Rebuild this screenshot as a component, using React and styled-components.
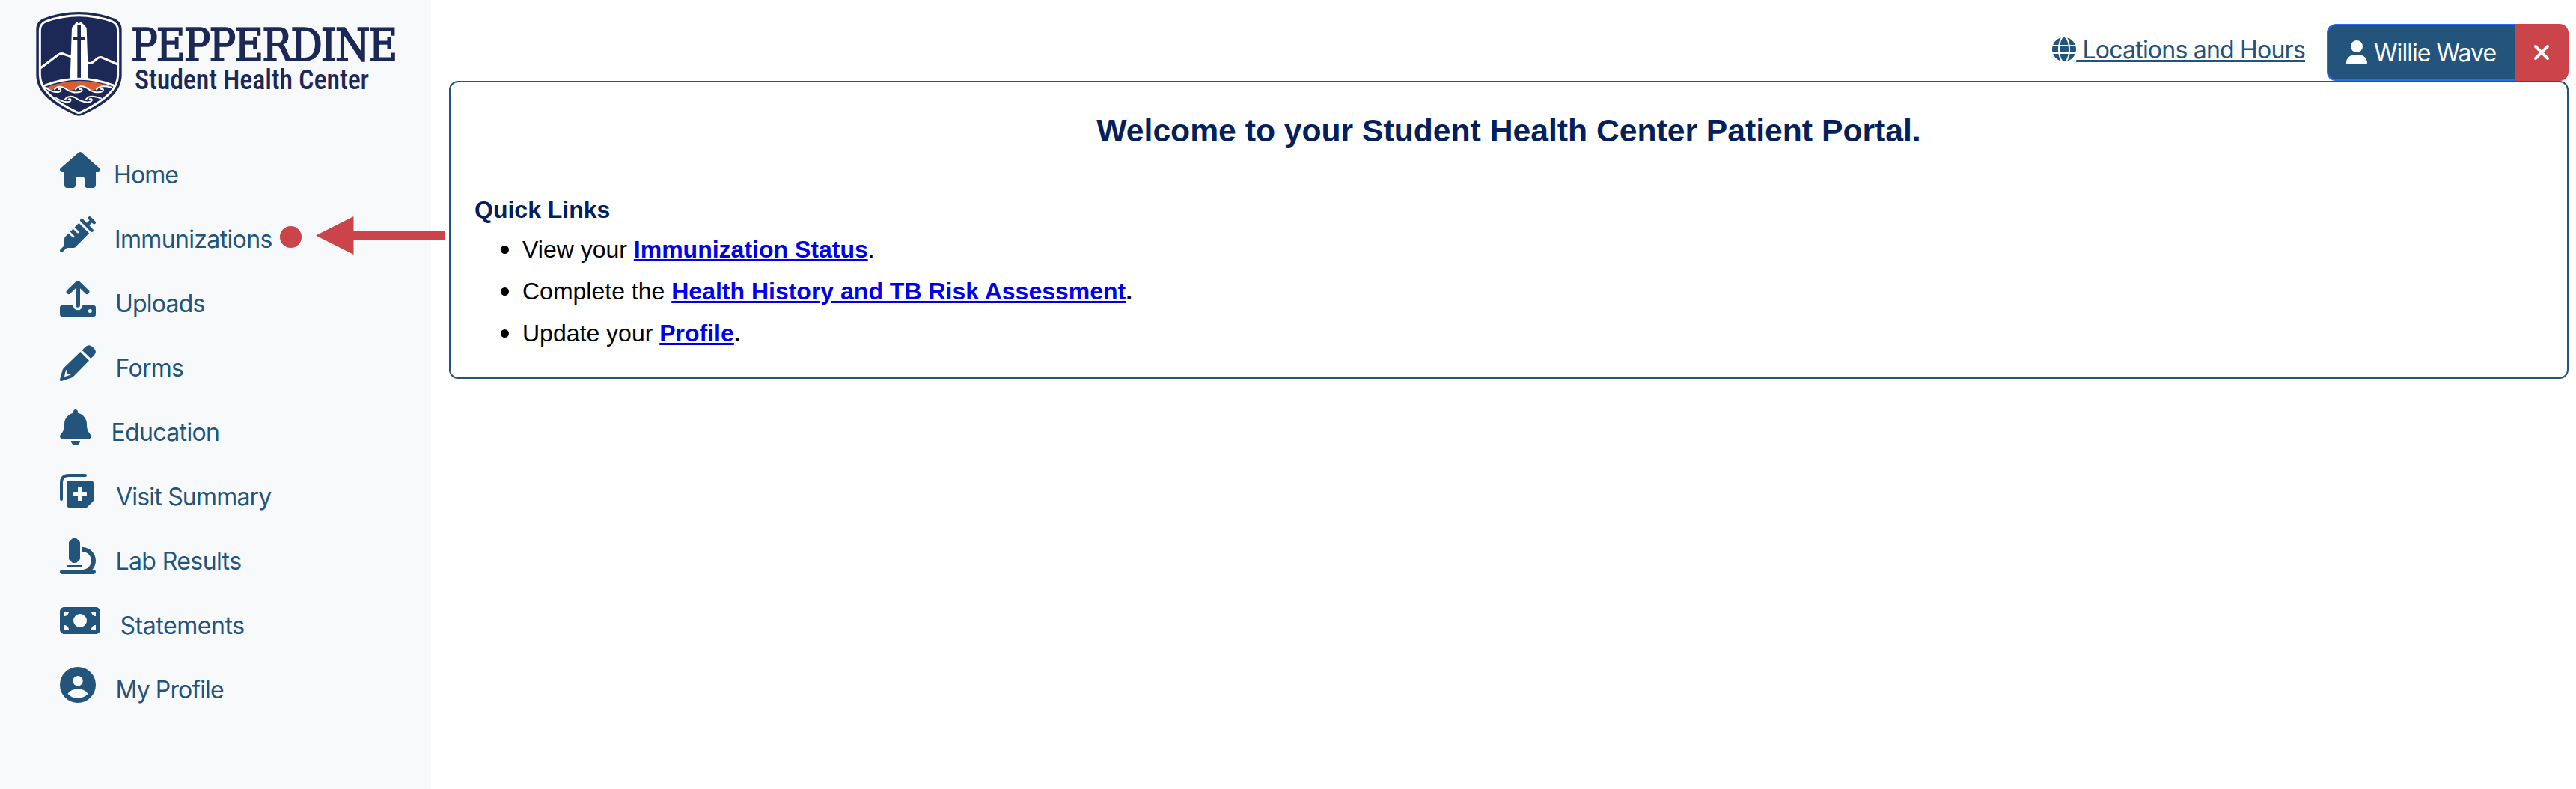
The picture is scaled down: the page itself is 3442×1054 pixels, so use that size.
import React from "react";
import styled, { createGlobalStyle } from "styled-components";
import {
  FaHouse,
  FaSyringe,
  FaBell,
  FaMicroscope,
  FaMoneyBill,
  FaCircleUser,
  FaGlobe,
  FaUser,
  FaXmark,
} from "react-icons/fa6";

const blue = "#22547c";
const red = "#cb444a";
const navy = "#1c2856";
const heading = "#03205b";

const GlobalStyle = createGlobalStyle`
  * { box-sizing: border-box; }
  body {
    margin: 0;
    background: #fff;
    font-family: Inter, "Liberation Sans", sans-serif;
    font-size: 32px;
    line-height: 48px;
  }
`;

const Page = styled.div`
  display: flex;
  height: 1054px;
  overflow: hidden;
`;

const Sidebar = styled.aside`
  position: relative;
  z-index: 1;
  flex: none;
  width: 576px;
  background: #f8f9fb;
`;

const Brand = styled.div`
  display: flex;
  height: 196px;
  padding: 5px 0 0 40px;
  color: ${navy};
`;

const Crest = styled.svg`
  flex: none;
  width: 135px;
  height: 160px;
`;

const BrandText = styled.div`
  display: flex;
  flex-direction: column;
  padding-top: 30px;
  white-space: nowrap;
`;

const BrandName = styled.div`
  font-family: "DejaVu Serif Condensed", "DejaVu Serif", serif;
  font-stretch: condensed;
  font-size: 59px;
  line-height: 51px;
  letter-spacing: -1.9px;
  -webkit-text-stroke: 1.7px ${navy};
`;

const BrandUnit = styled.div`
  padding-left: 5px;
  font-family: Roboto, sans-serif;
  font-stretch: 75%;
  font-weight: 480;
  font-size: 36px;
  line-height: 42px;
  letter-spacing: -0.12px;
`;

const Nav = styled.nav`
  display: flex;
  flex-direction: column;
  padding-left: 80px;
`;

const NavItem = styled.a`
  display: flex;
  align-items: flex-start;
  height: 86px;
  color: ${blue};
  text-decoration: none;

  > svg:first-child {
    flex: none;
    width: ${(p) => p.$iconWidth}px;
    height: 48px;
    margin: 7px ${(p) => p.$gap}px 0 0;
  }
`;

const NavLabel = styled.span`
  padding-top: 14px;
  letter-spacing: ${(p) => p.$tracking}px;
  white-space: nowrap;
`;

const AlertDot = styled.span`
  flex: none;
  width: 29px;
  height: 29px;
  margin: 20px 0 0 10px;
  border-radius: 50%;
  background: ${red};
`;

const Arrow = styled.svg`
  flex: none;
  width: 172px;
  height: 51px;
  margin: 7px 0 0 19px;
  fill: ${red};
`;

const Main = styled.main`
  flex: 1;
  min-width: 0;
  display: flex;
  flex-direction: column;
  padding: 0 10px 0 24px;
`;

const TopBar = styled.header`
  display: flex;
  justify-content: flex-end;
  align-items: flex-start;
  gap: 29px;
  height: 108px;
  padding-top: 32px;
`;

const HoursLink = styled.a`
  display: flex;
  align-items: flex-start;
  margin-top: 11px;
  color: ${blue};
  letter-spacing: -0.78px;
  white-space: pre;

  svg {
    width: 32px;
    height: 32px;
    margin-top: 7px;
  }

  span {
    text-decoration: underline;
    text-decoration-thickness: 3px;
    text-underline-offset: 2px;
  }
`;

const UserGroup = styled.div`
  display: flex;
  height: 76px;
  color: #fff;
`;

const UserButton = styled.div`
  display: flex;
  align-items: center;
  gap: 9px;
  width: 251px;
  padding-left: 24px;
  border: 2px solid #2c6bef;
  border-right: 0;
  border-radius: 12px 0 0 12px;
  background: ${blue};
  letter-spacing: -0.95px;
  white-space: nowrap;

  svg {
    flex: none;
    width: 28px;
    height: 32px;
  }

  span {
    padding-top: 2px;
  }
`;

const LogoutButton = styled.div`
  display: flex;
  align-items: center;
  justify-content: center;
  width: 72px;
  border-radius: 0 12px 12px 0;
  background: ${red};

  svg {
    width: 24px;
    height: 32px;
  }
`;

const Panel = styled.section`
  padding: 40px 32px 31px;
  border: 2px solid ${blue};
  border-radius: 12px;
  font-family: "Liberation Sans", Arial, sans-serif;
  color: #000;
`;

const Welcome = styled.h1`
  margin: 0 0 64px;
  font-size: 42.67px;
  line-height: 48px;
  text-align: center;
  color: ${heading};
`;

const SectionTitle = styled.h2`
  margin: 0 0 7px;
  font-size: 32px;
  line-height: 36px;
  color: ${heading};
`;

const LinkList = styled.ul`
  margin: 0;
  padding-left: 64px;
  line-height: 56px;
  list-style: none;
`;

const LinkRow = styled.li`
  height: 56px;

  &::before {
    content: "";
    display: inline-block;
    width: 11px;
    height: 11px;
    margin: 0 18px 0 -29px;
    border-radius: 50%;
    background: #000;
    vertical-align: 5px;
  }
`;

const QuickLink = styled.a`
  font-weight: bold;
  color: #0000ee;
  text-decoration: underline;
  text-decoration-thickness: 3px;
`;

function UploadIcon() {
  return (
    <svg viewBox="0 0 144 144" fill="none" aria-hidden="true">
      <path
        fill="currentColor"
        fillRule="evenodd"
        d="M9 99H53A19 19 0 0 0 91 99H135Q144 99 144 108V135Q144 144 135 144H9Q0 144 0 135V108Q0 99 9 99ZM121 114A7.5 7.5 0 1 0 121 129A7.5 7.5 0 1 0 121 114Z"
      />
      <path
        stroke="currentColor"
        strokeWidth="18"
        strokeLinecap="round"
        strokeLinejoin="round"
        d="M35 45L72 9L109 45M72 12V98"
      />
    </svg>
  );
}

function PencilIcon() {
  return (
    <svg viewBox="0 0 144 144" fill="currentColor" aria-hidden="true">
      <path
        fillRule="evenodd"
        d="M82 27L117 62L54 126Q50 130 45 131L7 144Q-1 145 0 137L11 98Q13 93 17 90ZM25 99Q21 108 18 127Q31 124 44 118L43 115H29V101Z"
      />
      <path d="M89 20L101 8Q115 -6 130 6L138 14Q150 28 137 41L124 54Z" />
    </svg>
  );
}

function VisitIcon() {
  return (
    <svg viewBox="0 0 144 144" fill="none" aria-hidden="true">
      <path
        stroke="currentColor"
        strokeWidth="12"
        strokeLinecap="round"
        d="M6 102V36Q6 6 36 6H102"
      />
      <path
        fill="currentColor"
        fillRule="evenodd"
        d="M38 27H124Q135 27 135 38V108L108 135H38Q27 135 27 124V38Q27 27 38 27ZM72 56V72H56Q54 72 54 74V88Q54 90 56 90H72V106Q72 108 74 108H88Q90 108 90 106V90H106Q108 90 108 88V74Q108 72 106 72H90V56Q90 54 88 54H74Q72 54 72 56Z"
      />
    </svg>
  );
}

const NAV = [
  { label: "Home", icon: FaHouse, width: 54, gap: 18, tracking: -0.9 },
  { label: "Immunizations", icon: FaSyringe, width: 48, gap: 25, tracking: -0.65, alert: true },
  { label: "Uploads", icon: UploadIcon, width: 48, gap: 26, tracking: -0.8 },
  { label: "Forms", icon: PencilIcon, width: 48, gap: 26.5, tracking: -0.7 },
  { label: "Education", icon: FaBell, width: 42, gap: 26.5, tracking: -0.65 },
  { label: "Visit Summary", icon: VisitIcon, width: 48, gap: 27, tracking: -0.8 },
  { label: "Lab Results", icon: FaMicroscope, width: 48, gap: 26.5, tracking: -0.6 },
  { label: "Statements", icon: FaMoneyBill, width: 54, gap: 26.5, tracking: -0.45 },
  { label: "My Profile", icon: FaCircleUser, width: 48, gap: 26.5, tracking: -0.9 },
];

const LINKS = [
  { lead: "View your ", text: "Immunization Status", end: "." },
  { lead: "Complete the ", text: "Health History and TB Risk Assessment", end: <b>.</b> },
  { lead: "Update your ", text: "Profile", end: <b>.</b> },
];

function ShieldCrest() {
  return (
    <Crest viewBox="0 0 405 480" fill="none" aria-hidden="true">
      <path
        fill={navy}
        d="M196 33C150 33 100 42 58 58C36 66 25 80 25 104V285C25 350 78 398 180 445Q196 453 212 445C314 398 368 350 368 285V104C368 80 356 66 334 58C292 42 242 33 196 33Z"
      />
      <path
        stroke="#fff"
        strokeWidth="9"
        d="M196 47C150 47 108 55 66 70C48 77 40 88 40 107V285C40 340 88 386 186 434Q196 439 206 434C304 386 353 340 353 285V107C353 88 345 77 327 70C284 55 242 47 196 47Z"
      />
      <g stroke="#fff" strokeWidth="9" strokeLinejoin="round">
        <path d="M42 258L114 204Q126 196 138 203L168 213" />
        <path d="M230 236Q242 242 252 234L272 218Q281 211 292 217L352 243" />
      </g>
      <path
        fill="#fff"
        d="M161 302L168 97L187 73L192 73L193 79H199L200 73L205 73L227 97L234 302Z"
      />
      <path fill={navy} d="M190 87H204V132H220V144H204V298H190V144H174V132H190Z" />
      <g transform="translate(45 285)">
        <path
          fill="#d75f33"
          d="M20 50Q150 -1 285 48C250 42 232 44 222 58C205 66 198 66 182 52C168 42 146 44 138 58C115 66 112 68 96 54C82 44 62 44 54 58C40 64 30 58 20 50Z"
        />
        <path stroke="#fff" strokeWidth="9" d="M4 46Q150 -14 298 45" />
        <g stroke="#fff" strokeWidth="6" strokeLinecap="round">
          <path d="M18 50C35 66 60 74 76 66C82 60 78 54 70 57" />
          <path d="M54 58C62 44 82 44 96 54C112 68 140 76 160 66C167 60 162 54 154 57" />
          <path d="M138 58C146 44 168 42 182 52C198 66 225 76 246 66C252 60 248 54 240 57" />
          <path d="M222 58C232 44 250 42 280 50" />
          <path d="M60 93C78 104 100 114 116 106C122 100 118 94 110 97" />
          <path d="M96 98C104 84 124 84 138 92C156 106 184 114 200 106C207 100 202 94 194 97" />
          <path d="M180 98C188 86 208 82 240 94" />
        </g>
      </g>
    </Crest>
  );
}

export default function App() {
  return (
    <>
      <GlobalStyle />
      <Page>
        <Sidebar>
          <Brand>
            <ShieldCrest />
            <BrandText>
              <BrandName>PEPPERDINE</BrandName>
              <BrandUnit>Student Health Center</BrandUnit>
            </BrandText>
          </Brand>
          <Nav>
            {NAV.map(({ label, icon: Icon, width, gap, tracking, alert }) => (
              <NavItem key={label} $iconWidth={width} $gap={gap}>
                <Icon />
                <NavLabel $tracking={tracking}>{label}</NavLabel>
                {alert && (
                  <>
                    <AlertDot />
                    <Arrow viewBox="0 0 172 51">
                      <path d="M0 25.5L50.5 0V20H172V31H50.5V51Z" />
                    </Arrow>
                  </>
                )}
              </NavItem>
            ))}
          </Nav>
        </Sidebar>
        <Main>
          <TopBar>
            <HoursLink>
              <FaGlobe />
              <span> Locations and Hours</span>
            </HoursLink>
            <UserGroup>
              <UserButton>
                <FaUser />
                <span>Willie Wave</span>
              </UserButton>
              <LogoutButton>
                <FaXmark />
              </LogoutButton>
            </UserGroup>
          </TopBar>
          <Panel>
            <Welcome>Welcome to your Student Health Center Patient Portal.</Welcome>
            <SectionTitle>Quick Links</SectionTitle>
            <LinkList>
              {LINKS.map(({ lead, text, end }) => (
                <LinkRow key={text}>
                  {lead}
                  <QuickLink>{text}</QuickLink>
                  {end}
                </LinkRow>
              ))}
            </LinkList>
          </Panel>
        </Main>
      </Page>
    </>
  );
}
